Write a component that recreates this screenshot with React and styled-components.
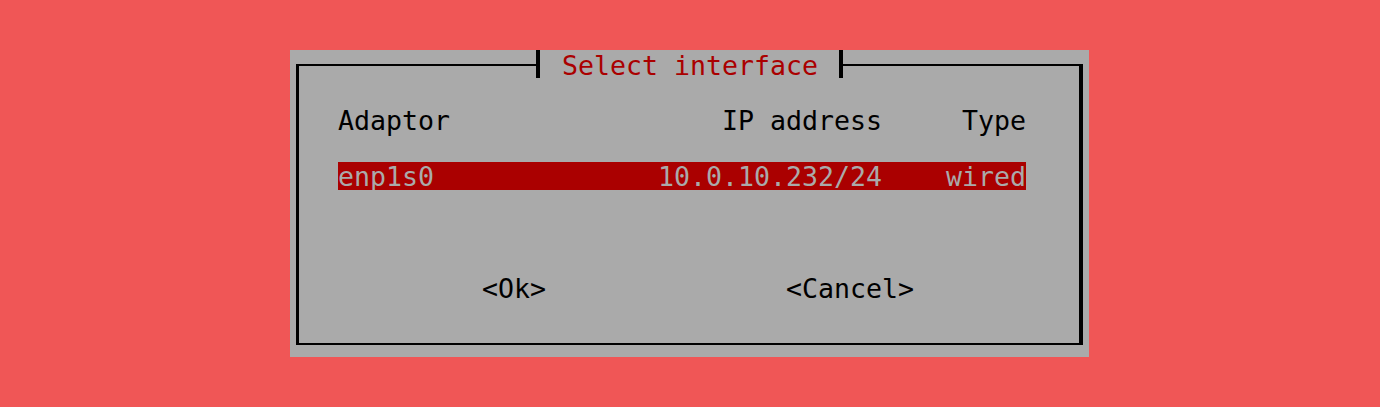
import React from "react";
import styled, { createGlobalStyle } from "styled-components";

const GlobalStyle = createGlobalStyle`
  html, body {
    margin: 0;
    padding: 0;
    background: #f05656;
  }
  body {
    font-family: "DejaVu Sans Mono", "Liberation Mono", monospace;
    font-size: 26.58px;
  }
`;

const Screen = styled.div`
  min-height: 407px;
  padding-right: 1px;
  display: flex;
  align-items: center;
  justify-content: center;
`;

const Panel = styled.div`
  position: relative;
  box-sizing: border-box;
  width: 799px;
  height: 307px;
  background: #aaaaaa;
  padding: 14px 6px 12px 6px;
  display: flex;
`;

const Frame = styled.div`
  flex: 1;
  border-style: solid;
  border-color: #000;
  border-width: 2px 4px 2px 3px;
  padding: 40px 0 0 39px;
  display: flex;
  flex-direction: column;
  align-items: flex-start;
`;

const Title = styled.div`
  position: absolute;
  top: 0;
  left: 0;
  right: 0;
  margin: 0 auto;
  width: fit-content;
  box-sizing: border-box;
  height: 28px;
  line-height: 28px;
  padding: 2px 21px 0 22px;
  border-left: 4px solid #000;
  border-right: 4px solid #000;
  background: #aaaaaa;
  color: #aa0000;
  white-space: pre;
`;

const Table = styled.div`
  display: flex;
  flex-direction: column;
  gap: 28px;
  width: 688px;
`;

const Row = styled.div`
  display: grid;
  grid-template-columns: 320px 224px 144px;
  box-sizing: border-box;
  height: 28px;
  padding-top: 2px;
  line-height: 26px;
  background: ${(p) => (p.$selected ? "#aa0000" : "transparent")};
  color: ${(p) => (p.$selected ? "#aaaaaa" : "#000000")};
`;

const Cell = styled.span`
  text-align: ${(p) => (p.$right ? "right" : "left")};
  white-space: pre;
`;

const ButtonRow = styled.div`
  display: flex;
  gap: 240px;
  margin-top: 84px;
  margin-left: 144px;
  box-sizing: border-box;
  height: 28px;
  padding-top: 2px;
  line-height: 26px;
`;

const Button = styled.span`
  color: #000;
  white-space: pre;
`;

const rows = [{ name: "enp1s0", ip: "10.0.10.232/24", type: "wired" }];

export default function App() {
  return (
    <>
      <GlobalStyle />
      <Screen>
        <Panel>
          <Title>Select interface</Title>
          <Frame>
            <Table>
              <Row>
                <Cell>Adaptor</Cell>
                <Cell $right>IP address</Cell>
                <Cell $right>Type</Cell>
              </Row>
              {rows.map((r, i) => (
                <Row key={r.name} $selected={i === 0}>
                  <Cell>{r.name}</Cell>
                  <Cell $right>{r.ip}</Cell>
                  <Cell $right>{r.type}</Cell>
                </Row>
              ))}
            </Table>
            <ButtonRow>
              <Button>&lt;Ok&gt;</Button>
              <Button>&lt;Cancel&gt;</Button>
            </ButtonRow>
          </Frame>
        </Panel>
      </Screen>
    </>
  );
}
